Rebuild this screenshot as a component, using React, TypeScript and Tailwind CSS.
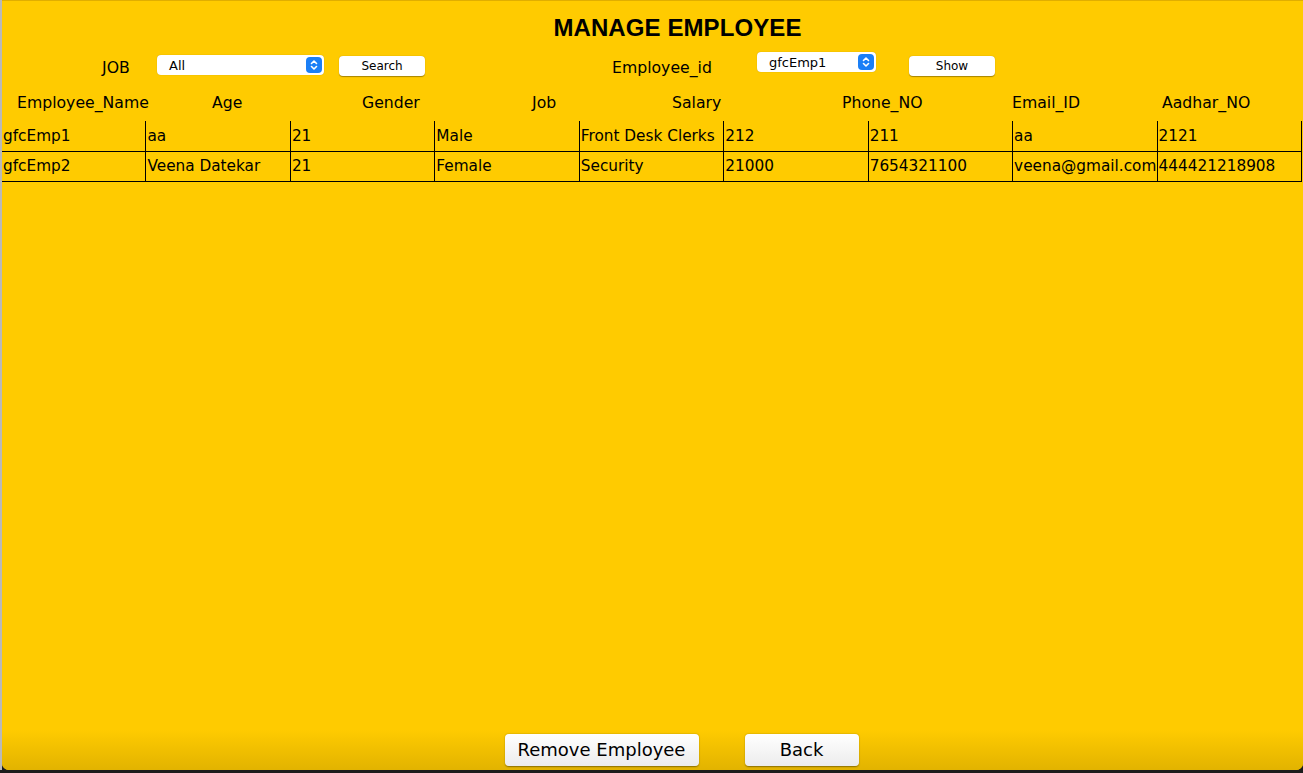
import React from 'react';

const headers = [
  { label: 'Employee_Name', w: 'w-[195px]' },
  { label: 'Age', w: 'w-[150px]' },
  { label: 'Gender', w: 'w-[170px]' },
  { label: 'Job', w: 'w-[140px]' },
  { label: 'Salary', w: 'w-[170px]' },
  { label: 'Phone_NO', w: 'w-[170px]' },
  { label: 'Email_ID', w: 'w-[150px]' },
  { label: 'Aadhar_NO', w: 'w-[140px]' },
];

const rows = [
  ['gfcEmp1', 'aa', '21', 'Male', 'Front Desk Clerks', '212', '211', 'aa', '2121'],
  ['gfcEmp2', 'Veena Datekar', '21', 'Female', 'Security', '21000', '7654321100', 'veena@gmail.com', '444421218908'],
];

const Stepper = () => (
  <div className="w-[16px] h-[16px] rounded-[4px] bg-[#1b7ff6] flex items-center justify-center">
    <svg width="10" height="12" viewBox="0 0 10 12" fill="none" stroke="white" strokeWidth="1.6" strokeLinecap="round" strokeLinejoin="round">
      <path d="M2.5 4.5 L5 2 L7.5 4.5" />
      <path d="M2.5 7.5 L5 10 L7.5 7.5" />
    </svg>
  </div>
);

const Select = ({ value, w }: { value: string; w: string }) => (
  <div className={`${w} h-[20px] bg-white rounded-[4px] shadow-[0_0_1px_rgba(0,0,0,0.3)] flex items-center justify-between pl-[12px] pr-[2px]`}>
    <span className="text-[13px] text-black leading-none">{value}</span>
    <Stepper />
  </div>
);

const SmallButton = ({ label }: { label: string }) => (
  <button className="w-[86px] h-[20px] bg-white rounded-[4px] shadow-[0_0.5px_1px_rgba(0,0,0,0.35)] text-[12px] text-black leading-none flex items-center justify-center">
    {label}
  </button>
);

const BigButton = ({ label, w }: { label: string; w: string }) => (
  <button className={`${w} h-[32px] rounded-[4px] bg-gradient-to-b from-white to-[#ececec] shadow-[0_0.5px_1.5px_rgba(0,0,0,0.4)] text-[18px] text-black leading-none flex items-center justify-center`}>
    {label}
  </button>
);

export default function App() {
  return (
    <div className="w-[1303px] h-[773px] bg-[#1c1c1c] flex overflow-hidden" style={{ fontFamily: '"DejaVu Sans", Verdana, sans-serif' }}>
      <div className="w-[2px] h-[770px] bg-[#b9b9b9]" />
      <div className="w-[1301px] h-[770px] bg-[#ffcb00] rounded-b-[7px] border-t border-[#e0ae00] flex flex-col overflow-hidden">
        {/* Title */}
        <div className="h-[44px] flex items-start justify-center pl-[50px] pt-[15px]">
          <h1 className="text-[24px] font-bold text-black leading-none tracking-[0.1px]" style={{ fontFamily: '"Liberation Sans", Arial, sans-serif' }}>
            MANAGE EMPLOYEE
          </h1>
        </div>

        {/* Filters */}
        <div className="h-[32px] flex items-start pl-[100px] pt-[9px]">
          <div className="w-[55px] h-[20px] mt-[4px] flex items-center text-[15.7px] text-black">JOB</div>
          <div className="mt-[1px]"><Select value="All" w="w-[167px]" /></div>
          <div className="ml-[15px] mt-[2px]"><SmallButton label="Search" /></div>
          <div className="ml-[187px] w-[145px] h-[20px] mt-[4px] flex items-center text-[15.7px] text-black">Employee_id</div>
          <div className="-mt-[2px]"><Select value="gfcEmp1" w="w-[119px]" /></div>
          <div className="ml-[33px] mt-[2px]"><SmallButton label="Show" /></div>
        </div>

        {/* Column headers */}
        <div className="h-[44px] flex items-center pl-[15px] pt-[8px]">
          {headers.map((h) => (
            <div key={h.label} className={`${h.w} text-[15.7px] text-black whitespace-nowrap`}>
              {h.label}
            </div>
          ))}
        </div>

        {/* Table */}
        <div className="w-[1300px] grid grid-cols-9">
          {rows.map((row, ri) =>
            row.map((cell, ci) => (
              <div
                key={`${ri}-${ci}`}
                className={`${ri === 0 ? 'h-[31px]' : 'h-[30px]'} border-r border-b border-black flex items-center pl-[1px] text-[15.3px] text-black whitespace-nowrap`}
              >
                {cell}
              </div>
            ))
          )}
        </div>

        <div className="flex-1" />

        {/* Bottom actions */}
        <div className="h-[40px] pt-[4px] bg-gradient-to-b from-[#ffcb00] to-[#e2b300] flex items-start justify-center gap-[46px] pl-[58px]">
          <BigButton label="Remove Employee" w="w-[194px]" />
          <BigButton label="Back" w="w-[114px]" />
        </div>
      </div>
    </div>
  );
}
